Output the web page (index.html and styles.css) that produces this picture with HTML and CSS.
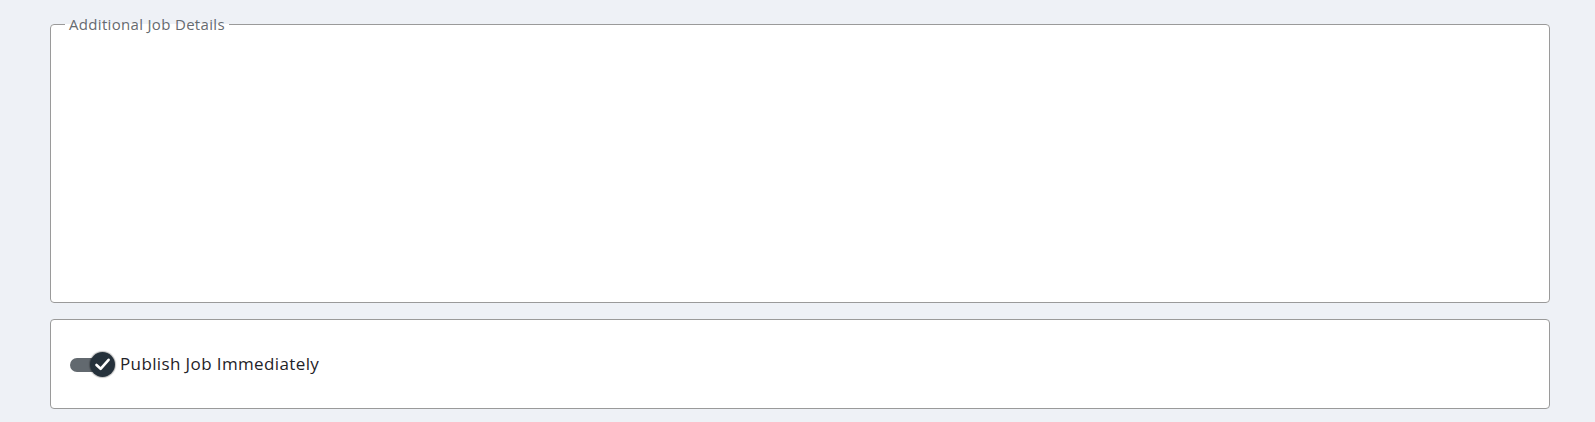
FILE: index.html
```html
<!DOCTYPE html>
<html lang="en">
<head>
  <meta charset="UTF-8" />
  <meta name="viewport" content="width=device-width, initial-scale=1.0"/>
  <title>Job Details</title>
  <link rel="stylesheet" href="styles.css">
</head>
<body>
  <div class="page">
    <fieldset class="details-box">
      <legend>Additional Job Details</legend>
      <div class="details-body"></div>
    </fieldset>

    <div class="publish-box">
      <label class="switch">
        <span class="switch-track"></span>
        <span class="switch-thumb">
          <svg width="19" height="19" viewBox="0 0 19 19">
            <path d="M3.5 10 L7.6 13.8 L15.6 4.8" fill="none" stroke="#fff" stroke-width="2.6" stroke-linecap="round" stroke-linejoin="round"/>
          </svg>
        </span>
        <span class="switch-label">Publish Job Immediately</span>
      </label>
    </div>
  </div>
</body>
</html>
```

FILE: styles.css
```css
body {
  margin: 0;
  background: #eef1f6;
  font-family: "Open Sans", Arial, sans-serif;
  color: #1f2328;
}
.page {
  padding: 14px 45px 13px 50px;
  display: flex;
  flex-direction: column;
  gap: 16px;
}
.details-box {
  margin: 0;
  padding: 0 14px;
  border: 1px solid #9a9a9a;
  border-radius: 4px;
  background: #fff;
  height: 289px;
  box-sizing: border-box;
}
.details-box legend {
  padding: 0 4px;
  font-size: 15px;
  line-height: 20px;
  color: #666b70;
  letter-spacing: 0.32px;
}
.publish-box {
  border: 1px solid #9a9a9a;
  border-radius: 4px;
  background: #fff;
  height: 90px;
  box-sizing: border-box;
  padding: 0 19px;
  display: flex;
  align-items: center;
}
.switch {
  position: relative;
  display: flex;
  align-items: center;
  height: 26px;
  padding-top: 2px;
}
.switch-track {
  width: 34px;
  height: 14px;
  border-radius: 7px;
  background: #62696f;
}
.switch-thumb {
  position: absolute;
  left: 20px;
  top: 2px;
  width: 25px;
  height: 25px;
  border-radius: 50%;
  background: #25313b;
  box-shadow: 0 0 1px 1px rgba(0,0,0,0.25);
  display: flex;
  align-items: center;
  justify-content: center;
}
.switch-label {
  margin-left: 16px;
  padding-bottom: 3px;
  font-size: 17px;
  letter-spacing: 0.38px;
  color: #1f2328;
}
```
